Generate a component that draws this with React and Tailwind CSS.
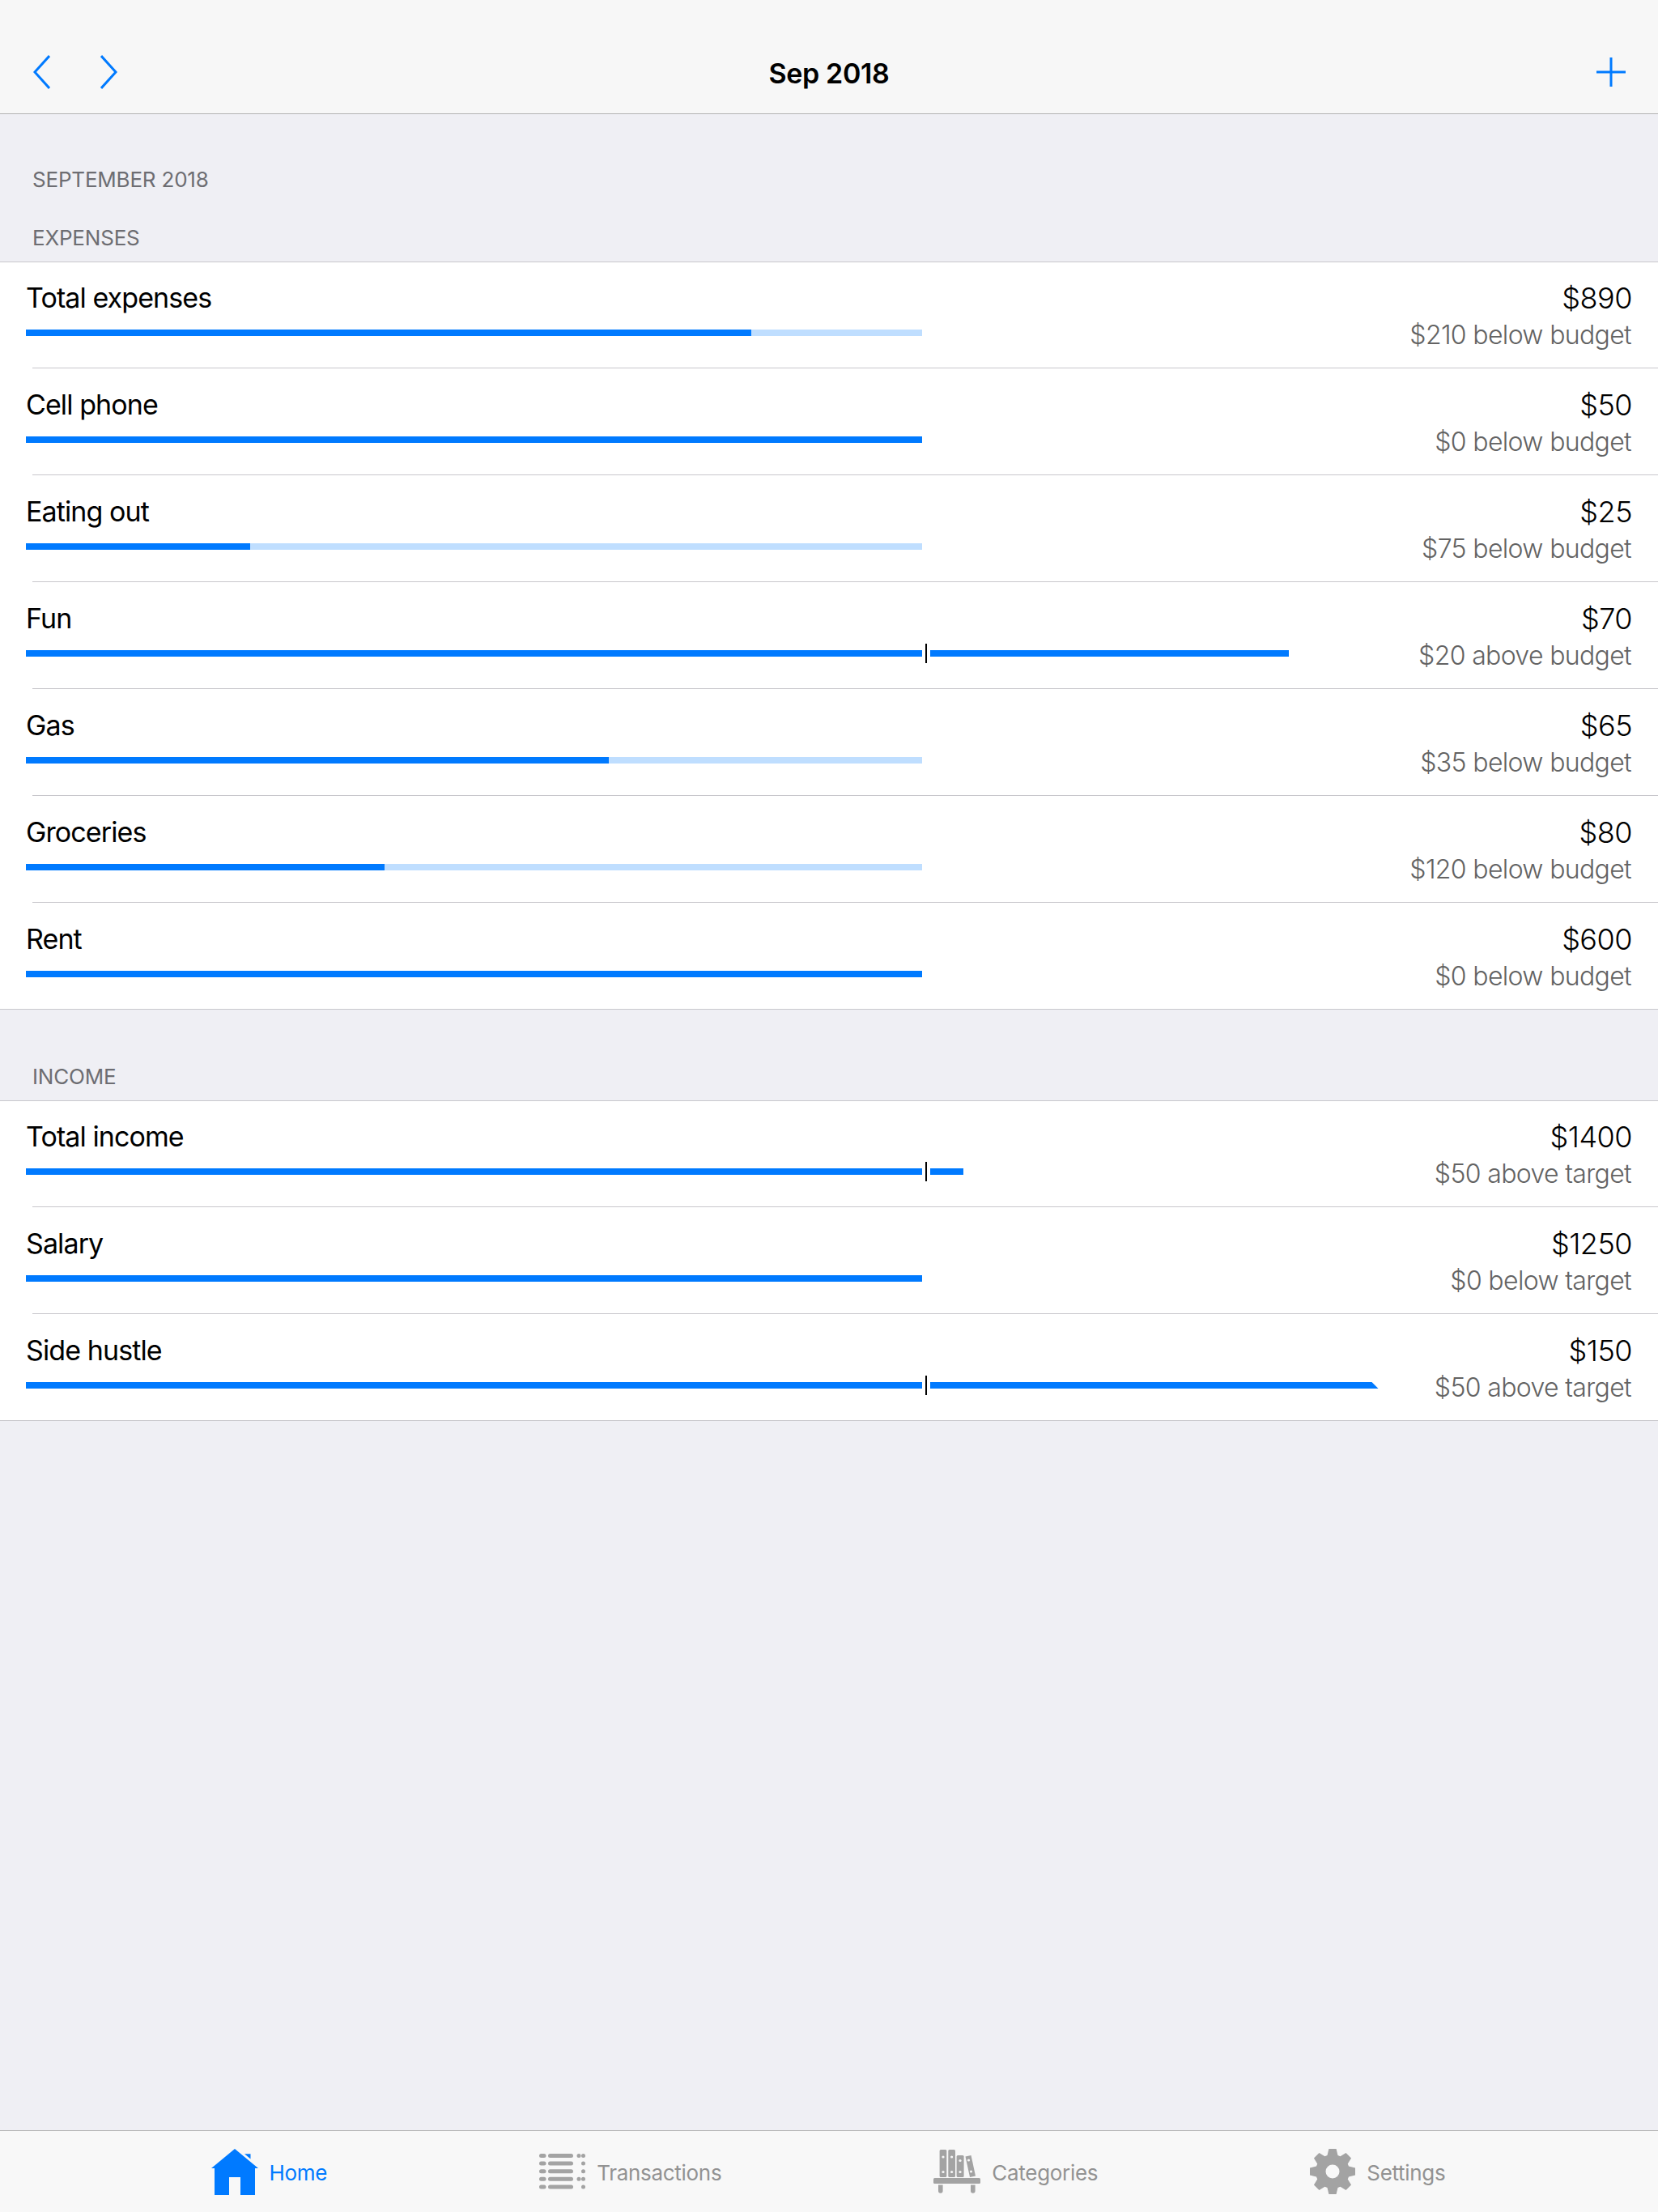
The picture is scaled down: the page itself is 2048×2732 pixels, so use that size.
import React from 'react';

const TRACK = 1107;

const expenses = [
  { name: 'Total expenses', value: '$890', note: '$210 below budget', fill: 890 / 1100 },
  { name: 'Cell phone', value: '$50', note: '$0 below budget', fill: 1 },
  { name: 'Eating out', value: '$25', note: '$75 below budget', fill: 0.25 },
  { name: 'Fun', value: '$70', note: '$20 above budget', fill: 1, over: 0.4 },
  { name: 'Gas', value: '$65', note: '$35 below budget', fill: 0.65 },
  { name: 'Groceries', value: '$80', note: '$120 below budget', fill: 0.4 },
  { name: 'Rent', value: '$600', note: '$0 below budget', fill: 1 },
];

const income = [
  { name: 'Total income', value: '$1400', note: '$50 above target', fill: 1, over: 50 / 1350 },
  { name: 'Salary', value: '$1250', note: '$0 below target', fill: 1 },
  { name: 'Side hustle', value: '$150', note: '$50 above target', fill: 1, over: 0.5, cut: true },
];

function gearPath() {
  const pts = [];
  for (let i = 0; i < 8; i++) {
    const a = (i * Math.PI) / 4;
    const tooth = [[-6.5, 20], [-4.6, 28], [4.6, 28], [6.5, 20]];
    tooth.forEach(([x, r]) => {
      pts.push(`${(28 + x * Math.cos(a) + r * Math.sin(a)).toFixed(2)} ${(28 + x * Math.sin(a) - r * Math.cos(a)).toFixed(2)}`);
    });
  }
  return `M${pts.join('L')}ZM28 19.5a8.5 8.5 0 1 0 0 17a8.5 8.5 0 1 0 0-17Z`;
}

function HomeIcon() {
  return (
    <svg width="58" height="57" viewBox="0 0 58 57" fill="#007aff">
      <path d="M29 0L58 24L54 24L54 57L36 57L36 35L22 35L22 57L4 57L4 24L0 24Z" />
      <path d="M41 6.3L48.5 6.3L48.5 12.5Z" />
    </svg>
  );
}

function ListIcon() {
  const rows = [2.5, 12, 21.7, 31.3, 41];
  return (
    <svg width="57" height="44" viewBox="0 0 57 44" fill="#a3a3a3">
      {rows.map((y, i) => (
        <g key={y}>
          <rect x="0" y={y - 2.5} width="8.5" height="5" rx="2.5" />
          <rect x="11" y={y - 2.5} width="31" height="5" rx="2.5" />
          {(i === 0 || i === 3) && <circle cx="49" cy={y} r="2.5" />}
          <circle cx="54.5" cy={y} r="2.5" />
        </g>
      ))}
    </svg>
  );
}

function ShelfIcon() {
  const holes = [
    [12, 9], [12, 27.5], [22.6, 9], [22.6, 27.5], [33, 13.5], [33, 27.5], [43.5, 13], [46.5, 27],
  ];
  return (
    <svg width="58" height="54" viewBox="0 0 58 54" fill="#a3a3a3">
      <rect x="7.6" y="0" width="8.7" height="34" rx="1.5" />
      <rect x="18.3" y="0" width="8.7" height="34" rx="1.5" />
      <rect x="28.6" y="7" width="9" height="27" rx="1.5" />
      <path d="M39.5 8.5L46.5 7L52 32.5L45 34Z" />
      {holes.map(([x, y]) => (
        <circle key={`${x}-${y}`} cx={x} cy={y} r="1.6" fill="#f7f7f7" />
      ))}
      <rect x="0" y="35" width="58" height="7" rx="1.5" />
      <path d="M6 43.5h5.6V51a2.8 2.8 0 0 1-5.6 0Z" />
      <path d="M46 43.5h5.6V51a2.8 2.8 0 0 1-5.6 0Z" />
    </svg>
  );
}

function GearIcon() {
  return (
    <svg width="56" height="56" viewBox="0 0 56 56" fill="#a3a3a3" fillRule="evenodd">
      <path d={gearPath()} />
    </svg>
  );
}

function Bar({ fill, over, cut }) {
  return (
    <div className="flex h-2 items-center">
      <div className="h-2 w-[1107px] shrink-0 bg-[#bfdeff]">
        <div className="h-2 bg-[#007aff]" style={{ width: fill * TRACK }} />
      </div>
      {over && (
        <>
          <div className="ml-1 h-6 w-0.5 shrink-0 bg-black" />
          <div
            className={
              cut
                ? 'ml-1 h-2 bg-[#007aff] [clip-path:polygon(0_0,calc(100%-8px)_0,100%_100%,0_100%)]'
                : 'ml-1 h-2 bg-[#007aff]'
            }
            style={{ width: over * TRACK }}
          />
        </>
      )}
    </div>
  );
}

function Row({ row, first, last }) {
  return (
    <div className={first ? 'relative h-[131px]' : 'relative h-[132px]'}>
      <div className="flex h-full items-end justify-between px-8">
        <div className="pb-[40px]">
          <div className="mb-[19px] text-[34px] leading-10 tracking-[-0.9px] text-black">{row.name}</div>
          <Bar fill={row.fill} over={row.over} cut={row.cut} />
        </div>
        <div className="pb-[21px] text-right">
          <div className="text-[36px] leading-10 font-light tracking-[-0.5px] text-black">{row.value}</div>
          <div className="mt-1.5 mr-px text-[32px] leading-10 font-light tracking-[-0.65px] text-[#636363]">{row.note}</div>
        </div>
      </div>
      <div className={last ? 'absolute inset-x-0 bottom-0 h-px bg-[#c8c7cc]' : 'absolute right-0 bottom-0 left-10 h-px bg-[#c8c7cc]'} />
    </div>
  );
}

function Section({ rows }) {
  return (
    <div className="border-t border-[#c8c7cc] bg-white">
      {rows.map((row, i) => (
        <Row key={row.name} row={row} first={i === 0} last={i === rows.length - 1} />
      ))}
    </div>
  );
}

function Tab({ icon, label, active }) {
  return (
    <div className="flex items-center gap-[14px]">
      {icon}
      <span className={active ? 'pt-1 text-[26px] leading-8 tracking-[-0.3px] text-[#007aff]' : 'pt-1 text-[26px] leading-8 tracking-[-0.3px] text-[#929292]'}>
        {label}
      </span>
    </div>
  );
}

export default function App() {
  return (
    <div className="flex h-[2732px] w-[2048px] flex-col overflow-hidden bg-[#efeff4] [font-family:Inter,sans-serif]">
      <header className="relative flex h-[141px] shrink-0 items-end justify-between border-b border-[#b2b2b2] bg-[#f7f7f7] pr-10 pb-[30px] pl-[41px]">
        <div className="flex items-center gap-[62px]">
          <svg width="21" height="42" viewBox="0 0 21 42" fill="none" stroke="#007aff" strokeWidth="3">
            <path d="M20 1L2 21L20 41" />
          </svg>
          <svg width="21" height="42" viewBox="0 0 21 42" fill="none" stroke="#007aff" strokeWidth="3">
            <path d="M1 1L19 21L1 41" />
          </svg>
        </div>
        <div className="absolute inset-x-0 bottom-[29px] text-center text-[34px] leading-10 font-semibold tracking-[-0.35px] text-black">Sep 2018</div>
        <svg width="36" height="36" viewBox="0 0 36 36" stroke="#007aff" strokeWidth="3" className="mb-[3px]">
          <path d="M18 0V36M0 18H36" />
        </svg>
      </header>

      <main className="flex-1">
        <div className="mt-[66px] pl-10 text-[26px] leading-[30px] tracking-[-0.2px] text-[#6d6d72]">SEPTEMBER 2018</div>
        <div className="mt-[42px] mb-[14px] pl-10 text-[26px] leading-[30px] tracking-[-0.2px] text-[#6d6d72]">EXPENSES</div>
        <Section rows={expenses} />
        <div className="mt-[68px] mb-[14px] pl-10 text-[26px] leading-[30px] tracking-[-0.2px] text-[#6d6d72]">INCOME</div>
        <Section rows={income} />
      </main>

      <footer className="flex h-[101px] shrink-0 items-center justify-center gap-[262px] border-t border-[#b2b2b2] bg-[#f8f8f8] pr-0.5">
        <Tab icon={<HomeIcon />} label="Home" active />
        <Tab icon={<ListIcon />} label="Transactions" />
        <Tab icon={<ShelfIcon />} label="Categories" />
        <Tab icon={<GearIcon />} label="Settings" />
      </footer>
    </div>
  );
}
